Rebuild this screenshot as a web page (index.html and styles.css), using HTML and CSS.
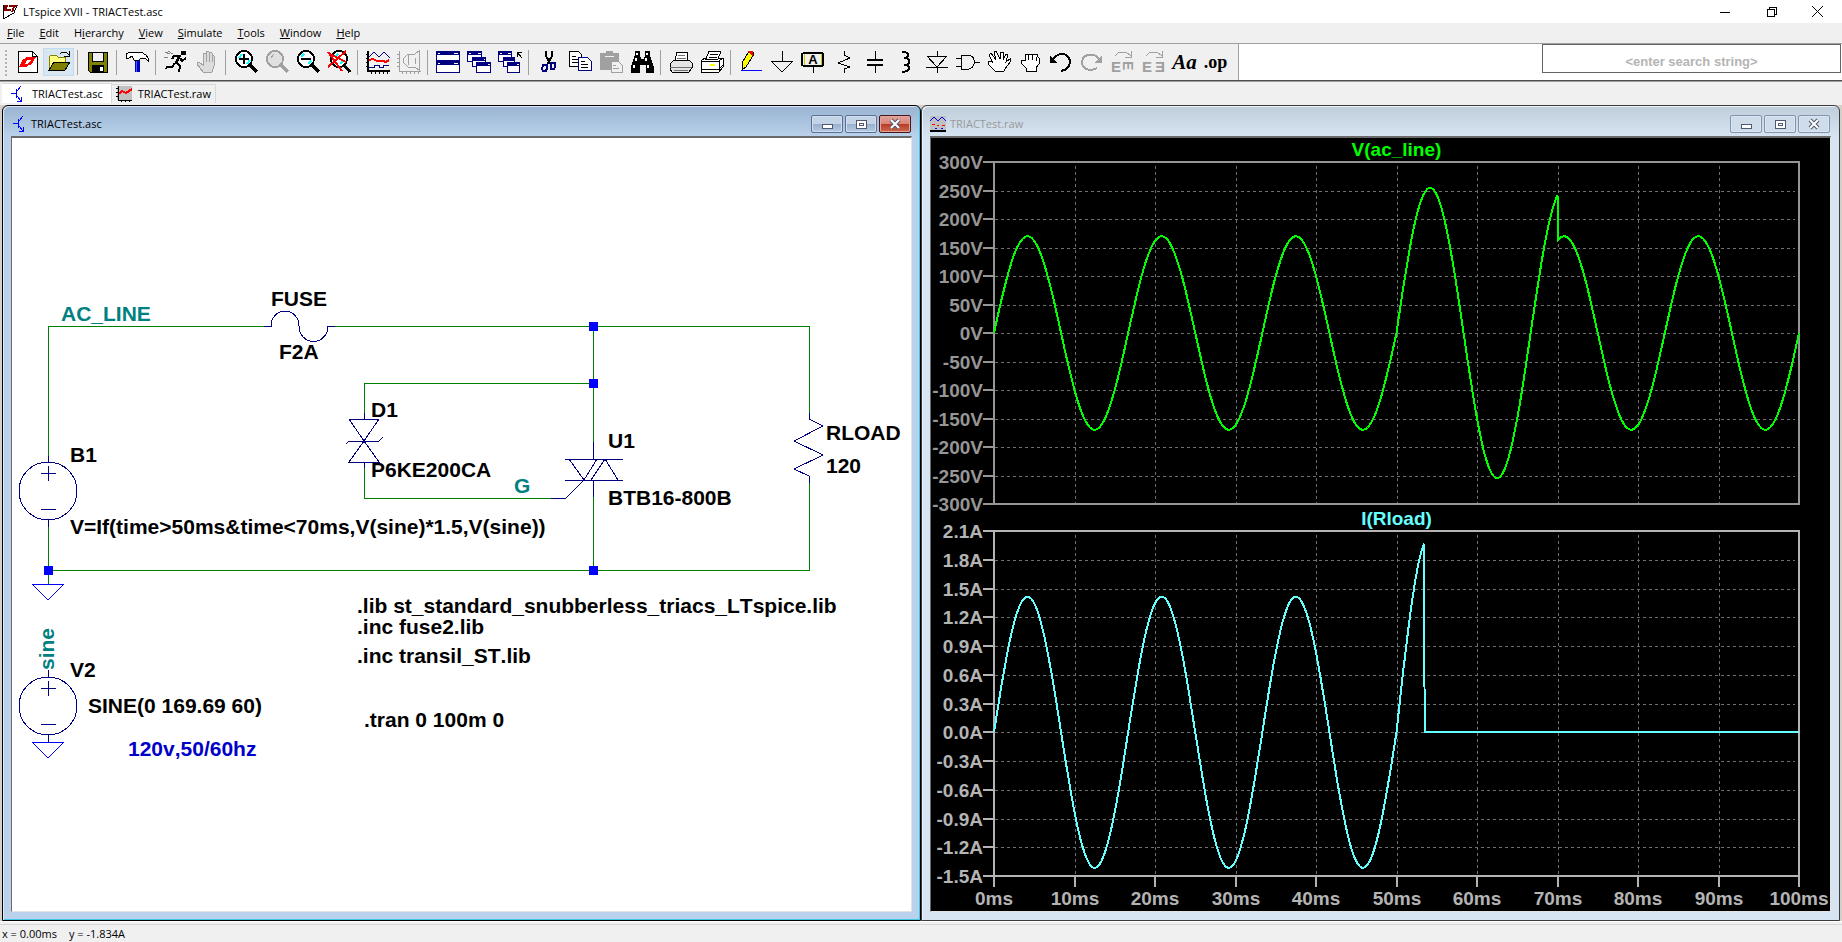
FILE: index.html
```html
<!DOCTYPE html>
<html lang="en">
<head>
    <meta charset="UTF-8">
    <meta name="viewport" content="width=device-width, initial-scale=1.0">
    <title>LTspice XVII - TRIACTest.asc</title>
    <link rel="stylesheet" href="styles.css">
</head>
<body>
    <header class="titlebar">
        <svg class="app-icon" width="16" height="16" viewBox="0 0 16 16">
            <path d="M1 1v14l11-6L15 1" fill="none" stroke="#000"/>
            <path d="M2 1h4L5 5h4v2H2zM7 1h9l-1 2h-2l-2 5H9l2-5H7z" fill="#800000"/>
        </svg>
        <span class="app-title">LTspice XVII - TRIACTest.asc</span>
        <div class="app-controls">
            <button aria-label="Minimize"><svg width="10" height="10"><path d="M0 5h10" stroke="#000"/></svg></button>
            <button aria-label="Restore"><svg width="11" height="11"><path d="M1 3h7v7H1zM3 3V1h7v7H8" fill="none" stroke="#000"/></svg></button>
            <button aria-label="Close"><svg class="smooth" width="11" height="11"><path d="M0 0l11 11M11 0L0 11" stroke="#000"/></svg></button>
        </div>
    </header>

    <nav class="menubar">
        <button><u>F</u>ile</button>
        <button><u>E</u>dit</button>
        <button>H<u>i</u>erarchy</button>
        <button><u>V</u>iew</button>
        <button><u>S</u>imulate</button>
        <button><u>T</u>ools</button>
        <button><u>W</u>indow</button>
        <button><u>H</u>elp</button>
    </nav>

    <div class="toolbar-row">
        <div class="toolbar">
            <button aria-label="New schematic"><svg viewBox="0 0 24 24"><path d="M2 1h14l5 5v16H2z" fill="#fff" stroke="#000"/><path d="M16 1v5h5" stroke="#000"/><path d="M3 17l4-8h5l-3 5h4l-2 3zM10 7h10l-5 8h-4l4-5h-6z" fill="#f00"/></svg></button>
            <button class="hot" aria-label="Open"><svg viewBox="0 0 24 24"><path d="M2 18V7l2-2h5l2 2h7v5" fill="#ffff80" stroke="#808000"/><path d="M2 20l5-8h16l-5 8z" fill="#808000" stroke="#000"/><path d="M13 4l2-2h4l3 3M22 1v5h-5" stroke="#000"/></svg></button>
            <span class="sep"></span>
            <button aria-label="Save"><svg viewBox="0 0 24 24"><path d="M2 2h19v20H4l-2-2z" fill="#808000" stroke="#000"/><path d="M6 2h11v9H6z" fill="#f0f0f0" stroke="#000"/><path d="M6 15h12v7H6z" fill="#000"/><path d="M14 17h3v4h-3z" fill="#fff"/></svg></button>
            <span class="sep"></span>
            <button aria-label="Control panel"><svg viewBox="0 0 24 24"><path d="M10 9h5v13h-5z" fill="#0000c0"/><path d="M11 9v13" stroke="#4060ff"/><path d="M1 4l4-2h11l5 3 2 3v3l-3-3h-4l-2 2H9L7 6 4 8H1z" fill="#fff" stroke="#000"/></svg></button>
            <span class="sep"></span>
            <button aria-label="Run"><svg viewBox="0 0 24 24"><path d="M17 1h5v4h-5z" fill="#000"/><path d="M16 5l-4 8" stroke="#000" stroke-width="3"/><path d="M16 6h-6l-2 3M16 8l2 3 4-3M12 12l4 4-1 6M11 13l-3 4H3l-1 2" stroke="#000" stroke-width="2"/><path d="M1 2l5 2M4 1l5 3M0 7l4 1" stroke="#808080"/></svg></button>
            <button aria-label="Halt"><svg viewBox="0 0 24 24"><path d="M8 22l-6-8v-2h2l4 3V4l1-1 2 1v8V2l1-1 2 1v10V3l2-1 1 1v9V6l1-1 1 1v10l-2 6z" fill="#dcdcdc" stroke="#a0a0a0"/></svg></button>
            <span class="sep"></span>
            <button aria-label="Zoom in"><svg viewBox="0 0 24 24"><circle cx="10" cy="9" r="8" fill="#fff" stroke="#000" stroke-width="2"/><path d="M5 8l3-4M13 14l3-4" stroke="#0ff" stroke-width="2"/><path d="M5 9h10M10 4v10" stroke="#000" stroke-width="2"/><path d="M16 15l7 7" stroke="#000" stroke-width="3"/></svg></button>
            <button aria-label="Pan"><svg viewBox="0 0 24 24"><circle cx="10" cy="9" r="8" fill="#e0e0e0" stroke="#a0a0a0" stroke-width="2"/><path d="M16 15l7 7" stroke="#a0a0a0" stroke-width="3"/><path d="M6 8l3-4" stroke="#a0a0a0"/></svg></button>
            <button aria-label="Zoom out"><svg viewBox="0 0 24 24"><circle cx="10" cy="9" r="8" fill="#fff" stroke="#000" stroke-width="2"/><path d="M5 7l3-3M12 14l3-3" stroke="#0ff" stroke-width="2"/><path d="M5 9h10" stroke="#000" stroke-width="2"/><path d="M16 15l7 7" stroke="#000" stroke-width="3"/></svg></button>
            <button aria-label="Zoom to fit"><svg viewBox="0 0 24 24"><circle cx="12" cy="9" r="8" fill="#fff" stroke="#000" stroke-width="2"/><path d="M8 7l3-3M13 14l3-3" stroke="#0ff" stroke-width="2"/><path d="M17 15l6 7" stroke="#000" stroke-width="3"/><path d="M1 2l14 19M19 1L1 17M1 3l18 9" stroke="#f00" stroke-width="2"/></svg></button>
            <span class="sep"></span>
            <button aria-label="Autorange"><svg viewBox="0 0 24 24"><path d="M2 1v20h22" stroke="#000" stroke-width="2"/><path d="M0 4h2M0 8h2M0 12h2M0 16h2M5 21v3M9 21v3M13 21v3M17 21v3M21 21v3" stroke="#000"/><path d="M3 7l5-5 5 5 5-5 6 6M3 17h5v-2h5v2h4v-2h6" stroke="#000080"/><path d="M3 10l4-1 4 2h6l3 1 3-2" stroke="#f00" stroke-width="2"/></svg></button>
            <button aria-label="Pick traces"><svg viewBox="0 0 24 24"><path d="M2 1v20h22M0 4h2M0 8h2M0 12h2M0 16h2M5 21v3M9 21v3M13 21v3M17 21v3M21 21v3M6 9l5-5h7l4-3v19l-4-3h-7l-5-5zM11 5v10M18 8v6" stroke="#a0a0a0"/></svg></button>
            <span class="sep"></span>
            <button aria-label="Tile windows"><svg viewBox="0 0 24 24"><path d="M0 1h24v22H0z" fill="#000080"/><path d="M1 5h22v5H1zM1 15h22v7H1z" fill="#fff"/><path d="M2 3h2M18 3h4M2 13h2M18 13h4" stroke="#fff"/></svg></button>
            <button aria-label="Cascade windows"><svg viewBox="0 0 24 24"><path d="M0 1h15v11H0zM5 7h14v10H5zM9 12h15v11H9z" fill="#000080"/><path d="M1 5h13v2H1zM1 7h4v4H1zM6 11h12v1H6zM6 12h3v4H6zM10 16h13v6H10z" fill="#fff"/><path d="M2 3h2M11 3h3M17 9h1M21 14h2" stroke="#fff"/></svg></button>
            <button aria-label="Close all windows"><svg viewBox="0 0 24 24"><path d="M0 1h14v11H0zM5 7h12v10H5zM9 12h13v11H9z" fill="#000080"/><path d="M1 5h12v2H1zM1 7h4v4H1zM6 11h10v1H6zM6 12h3v4H6zM10 16h11v6H10z" fill="#fff"/><path d="M2 3h2M10 3h3M19 14h2" stroke="#fff"/><path d="M24 8l-5-6M19 7V2h5" stroke="#000"/></svg></button>
            <span class="sep"></span>
            <button aria-label="Cut"><svg viewBox="0 0 24 24"><path d="M9 1v5l5 9M15 1v5l-5 9" stroke="#000" stroke-width="2"/><path d="M6 15h4v3l-1 3H6l-1-2zM14 13h4v4l-1 2h-3z" stroke="#000080" stroke-width="2"/></svg></button>
            <button aria-label="Copy"><svg viewBox="0 0 24 24"><path d="M1 1h9l3 3v12H1z" fill="#fff" stroke="#000"/><path d="M4 6h4M4 9h6M4 12h6" stroke="#000"/><path d="M10 7h9l4 4v9H10z" fill="#fff" stroke="#000080"/><path d="M13 11h4M13 14h7M13 17h7" stroke="#000"/></svg></button>
            <button aria-label="Paste"><svg viewBox="0 0 24 24"><path d="M1 3h6V1h7v2h6v17H1z" fill="#a0a0a0"/><path d="M6 6h9" stroke="#f0f0f0"/><path d="M12 11h7l4 4v7H12z" fill="#f0f0f0" stroke="#a0a0a0"/><path d="M14 15h3M14 18h6" stroke="#a0a0a0"/></svg></button>
            <button aria-label="Find"><svg viewBox="0 0 24 24"><path d="M5 1h5v4l1 4h3l1-4V1h5v4l4 12v6h-8v-8h-6v8H1v-6L5 5z" fill="#000"/><path d="M7 3v2M17 3v2M6 8v3M16 8v3M4 15v3M18 15v3" stroke="#fff" stroke-width="2"/></svg></button>
            <span class="sep"></span>
            <button aria-label="Print"><svg viewBox="0 0 24 24"><path d="M6 10l2-8h10l1 8" fill="#fff" stroke="#000"/><path d="M1 14l4-4h15l3 3v5l-3 4H3l-2-3z" fill="#e4e4e4" stroke="#000"/><path d="M1 17h22M5 20h14M9 5h7M8 8h9" stroke="#707070"/></svg></button>
            <button aria-label="Print setup"><svg viewBox="0 0 24 24"><path d="M1 11l4-3h18v9l-4 5H1z" fill="#fff" stroke="#000"/><path d="M6 9l3-8h12l-3 8z" fill="#fff" stroke="#000"/><path d="M10 4h8M9 7h8M1 11h18l4-3M19 11v11M1 19h18l4-4" stroke="#000"/><path d="M10 15h5" stroke="#ff0" stroke-width="2"/></svg></button>
            <span class="sep"></span>
            <button aria-label="Draw wire"><svg viewBox="0 0 24 24"><path d="M3 13L10 1h3l2 3-8 13-4 3z" fill="#ff0" stroke="#000"/><path d="M9 1h5v5l-4-3z" fill="#f00"/><path d="M2 20h21" stroke="#00f"/></svg></button>
            <button aria-label="Ground"><svg viewBox="0 0 24 24"><path d="M12 1v10M1 11h22L12 22z" stroke="#000"/></svg></button>
            <button aria-label="Label net"><svg viewBox="0 0 24 24"><path d="M1 4l2-1h18l1 1v11l-1 1H3l-2-1z" fill="#f0f0f0" stroke="#000" stroke-width="2"/><path d="M3 4v11M20 4v11" stroke="#c8c800"/><path d="M12 16v7" stroke="#000"/><text x="12" y="14" text-anchor="middle" font-size="13" font-weight="bold">A</text></svg></button>
            <button aria-label="Resistor"><svg viewBox="0 0 24 24"><path d="M12 1v4l6 3-12 5 12 4-6 2v4" stroke="#000"/></svg></button>
            <button aria-label="Capacitor"><svg viewBox="0 0 24 24"><path d="M12 1v8M12 15v8" stroke="#000"/><path d="M4 10h16M4 15h16" stroke="#000" stroke-width="2"/></svg></button>
            <button aria-label="Inductor"><svg viewBox="0 0 24 24"><path d="M9 1v1c7 0 7 6 1 6 7 0 7 7 0 7 7 0 7 6-1 7v1" stroke="#000" stroke-width="2"/></svg></button>
            <button aria-label="Diode"><svg viewBox="0 0 24 24"><path d="M12 1v5M2 6h20L12 17zM1 17h22M12 17v6" stroke="#000"/></svg></button>
            <button aria-label="Component"><svg viewBox="0 0 24 24"><path d="M5 5h8c7 2 7 12 0 14H5zM0 8h5M0 16h5M18 12h6" fill="#f0f0f0" stroke="#000"/></svg></button>
            <button aria-label="Move"><svg viewBox="0 0 24 24"><path d="M8 21L1 14v-3h3l2 2-4-8 2-2 5 7L7 2l2-1 4 8V2h3v8l3-6 2 1-2 7 4-3v3l-5 7-1 2z" fill="#fff" stroke="#000"/></svg></button>
            <button aria-label="Drag"><svg viewBox="0 0 24 24"><path d="M8 21v-3l-5-5v-3h4V5l2-1 2 1 1-1h3l1 1 3-1 1 3 1 1v6l-3 4v3z" fill="#fff" stroke="#000"/><path d="M10 5v5M14 5v5M18 7v4" stroke="#000"/></svg></button>
            <button aria-label="Undo"><svg viewBox="0 0 24 24"><path d="M4 10c2-7 15-9 17 1 0 6-4 9-9 10" stroke="#000" stroke-width="2"/><path d="M1 6v7h8z" fill="#000"/></svg></button>
            <button aria-label="Redo"><svg viewBox="0 0 24 24"><path d="M19 10C17 3 3 2 2 12c0 7 8 10 15 6" stroke="#a0a0a0" stroke-width="2"/><path d="M22 5v8h-8z" fill="#a0a0a0"/></svg></button>
            <button aria-label="Rotate"><svg viewBox="0 0 24 24"><path d="M4 6l4-4h7l5 4M20 1v6h-6" stroke="#a0a0a0"/><text class="dim" x="0" y="22" font-size="15">E</text><text class="dim" font-size="14" transform="translate(12 11) rotate(90)">E</text></svg></button>
            <button aria-label="Mirror"><svg viewBox="0 0 24 24"><path d="M4 6l4-4h7l5 4M20 1v6h-6" stroke="#a0a0a0"/><text class="dim" x="0" y="22" font-size="15">E</text><text class="dim" x="13" y="22" font-size="15">&#398;</text></svg></button>
            <button class="glyph italic" aria-label="Text">Aa</button>
            <button class="glyph" aria-label="SPICE directive">.op</button>
        </div>
        <div class="search">
            <input type="text" aria-label="Search" placeholder="&lt;enter search string&gt;">
        </div>
    </div>

    <div class="tabs">
        <button class="tab active">
            <svg width="16" height="16"><path d="M1 7h5M6 3v9M7 5l4-5M7 10l4 5M11 11v4H7" fill="none" stroke="#00f"/></svg>
            TRIACTest.asc
        </button>
        <button class="tab">
            <svg width="16" height="16"><path d="M1 0h15v14H1z" fill="#c0c0c0"/><path d="M2 0v14h14M0 2h2M0 6h2M0 10h2M5 14v2M9 14v2M13 14v2" fill="none" stroke="#000"/><path d="M3 8l3-3 4 2 6-4" fill="none" stroke="#f00" stroke-width="2"/></svg>
            TRIACTest.raw
        </button>
    </div>

    <main class="mdi">
        <section class="window active">
            <div class="window-title">
                <svg width="16" height="16"><path d="M2 7h5M7 3v9M8 5l4-5M8 10l4 5M12 11v4H8" fill="none" stroke="#00f"/></svg>
                <span>TRIACTest.asc</span>
                <div class="window-controls">
                    <button aria-label="Minimize"><svg width="12" height="12"><path d="M1 6h10v4H1z" fill="#fff" stroke="#505870"/></svg></button>
                    <button aria-label="Restore"><svg width="12" height="12"><path d="M1 2h10v8H1z" fill="#fff" stroke="#505870"/><path d="M4 5h4v2H4z" fill="none" stroke="#505870"/></svg></button>
                    <button class="close" aria-label="Close"><svg class="smooth" width="12" height="12"><path d="M2 2l8 8M10 2l-8 8" stroke="#505870" stroke-width="4"/><path d="M2 2l8 8M10 2l-8 8" stroke="#fff" stroke-width="2"/></svg></button>
                </div>
            </div>
            <div class="client">
                <svg class="schematic">
                    <g class="wire" transform="translate(-12 -138)">
                        <path d="M48 456V326H264M335 326H809V413M809 483V570H48V527M48 570V584"/>
                        <path d="M593 326V442M593 497V570M593 383H364V413M364 468V498H551"/>
                    </g>
                    <g class="symbol" transform="translate(-12 -138)">
                        <!-- fuse -->
                        <path d="M264 326H271A14 15 0 0 1 299 326A14 15 0 0 0 328 326H335"/>
                        <!-- B1 and V2 sources -->
                        <circle cx="48" cy="491" r="29"/>
                        <path d="M48 456V462M48 520V527M41 473H56M48 466V481M41 509H56"/>
                        <circle cx="48" cy="706" r="29"/>
                        <path d="M48 670V677M48 735V742M41 688H56M48 681V696M41 724H56"/>
                        <!-- D1 bidirectional TVS -->
                        <path d="M364 413V419M349 419H379L364 441ZM349 462H379L364 441ZM364 462V468M346 444L349 441H379L383 437"/>
                        <!-- U1 triac -->
                        <path d="M593 442V459M565 459H623M565 480H623M593 480V497M569 459L584 480L597 459M591 480L605 459L618 480M584 480L566 498H551"/>
                        <!-- load resistor -->
                        <path d="M809 413V419L823 426L794 441L823 455L794 469L809 476V483"/>
                    </g>
                    <g class="ground" transform="translate(-12 -138)">
                        <path d="M32 584H64L48 600ZM32 742H64L48 758Z"/>
                    </g>
                    <g class="node" transform="translate(-12 -138)">
                        <rect x="589" y="322" width="9" height="9"/>
                        <rect x="589" y="379" width="9" height="9"/>
                        <rect x="589" y="566" width="9" height="9"/>
                        <rect x="44" y="566" width="9" height="9"/>
                    </g>
                    <g transform="translate(-12 -138)">
                        <text class="net" x="61" y="321">AC_LINE</text>
                        <text class="net" x="514" y="493">G</text>
                        <text class="net" transform="translate(54 670) rotate(-90)">sine</text>
                        <text x="271" y="306">FUSE</text>
                        <text x="279" y="359">F2A</text>
                        <text x="70" y="462">B1</text>
                        <text x="70" y="534">V=If(time&gt;50ms&amp;time&lt;70ms,V(sine)*1.5,V(sine))</text>
                        <text x="371" y="417">D1</text>
                        <text x="371" y="477">P6KE200CA</text>
                        <text x="608" y="448">U1</text>
                        <text x="608" y="505">BTB16-800B</text>
                        <text x="826" y="440">RLOAD</text>
                        <text x="826" y="473">120</text>
                        <text x="357" y="613">.lib st_standard_snubberless_triacs_LTspice.lib</text>
                        <text x="357" y="634">.inc fuse2.lib</text>
                        <text x="357" y="663">.inc transil_ST.lib</text>
                        <text x="364" y="727">.tran 0 100m 0</text>
                        <text x="70" y="677">V2</text>
                        <text x="88" y="713">SINE(0 169.69 60)</text>
                        <text class="note" x="128" y="756">120v,50/60hz</text>
                    </g>
                </svg>
            </div>
        </section>

        <section class="window">
            <div class="window-title">
                <svg width="16" height="16"><path d="M0 0h16v14H0z" fill="#c0c0c0"/><path d="M0 5l4-4 4 4 4-4 4 4" fill="none" stroke="#00f"/><path d="M2 8h3M7 9h2M12 9h3" stroke="#f00"/><path d="M5 12h2M11 12h2" stroke="#00f"/><path d="M0 15h16" stroke="#000" stroke-width="2"/></svg>
                <span>TRIACTest.raw</span>
                <div class="window-controls">
                    <button aria-label="Minimize"><svg width="12" height="12"><path d="M1 6h10v4H1z" fill="#fff" stroke="#505870"/></svg></button>
                    <button aria-label="Restore"><svg width="12" height="12"><path d="M1 2h10v8H1z" fill="#fff" stroke="#505870"/><path d="M4 5h4v2H4z" fill="none" stroke="#505870"/></svg></button>
                    <button aria-label="Close"><svg class="smooth" width="12" height="12"><path d="M2 2l8 8M10 2l-8 8" stroke="#505870" stroke-width="4"/><path d="M2 2l8 8M10 2l-8 8" stroke="#fff" stroke-width="2"/></svg></button>
                </div>
            </div>
            <div class="client">
                <svg class="waveform" id="waveform"></svg>
            </div>
        </section>
    </main>

    <footer class="statusbar">
        <span>x = 0.00ms</span>
        <span>y = -1.834A</span>
    </footer>

    <script src="plot.js"></script>
</body>
</html>
```
FILE: styles.css
```css
* {
    box-sizing: border-box;
}

body {
    margin: 0;
    height: 100vh;
    display: flex;
    flex-direction: column;
    font-family: "Open Sans", "Noto Sans", sans-serif;
    font-size: 11px;
    line-height: 16px;
    color: #000;
    background-color: #f0f0f0;
    overflow: hidden;
}

button {
    font: inherit;
    color: inherit;
    background: none;
    border: none;
    padding: 0;
}

svg {
    display: block;
    flex: none;
    shape-rendering: crispEdges;
}

svg.smooth {
    shape-rendering: auto;
}

.titlebar {
    display: flex;
    align-items: center;
    height: 23px;
    padding-left: 2px;
    background-color: #fff;
}

.app-title {
    margin-left: 5px;
}

.app-controls {
    display: flex;
    margin-left: auto;
    padding-right: 2px;
}

.app-controls button {
    display: flex;
    align-items: center;
    justify-content: center;
    width: 46px;
    height: 20px;
}

.menubar {
    display: flex;
    gap: 1px;
    height: 21px;
    border-bottom: 1px solid #a0a0a0;
}

.menubar button {
    padding: 0 7px;
}

.toolbar-row {
    display: flex;
    height: 38px;
    background-color: #fff;
    border-bottom: 2px groove #a0a0a0;
}

.toolbar {
    display: flex;
    align-items: center;
    width: 1239px;
    flex: none;
    padding-left: 12px;
    background-color: #f0f0f0;
    background-image: repeating-linear-gradient(#b4b4b4 0 2px, #f0f0f0 2px 4px);
    background-size: 2px 26px;
    background-position: 5px 6px;
    background-repeat: no-repeat;
    border-right: 1px solid #a0a0a0;
}

.toolbar button {
    display: flex;
    align-items: center;
    justify-content: center;
    width: 31px;
    height: 28px;
    flex: none;
}

.toolbar button svg {
    width: 24px;
    height: 24px;
    fill: none;
    overflow: visible;
}

.toolbar button.hot {
    background-color: #d8e6f2;
    border: 1px solid #c0dcf3;
}

.toolbar svg text {
    font-family: "Liberation Sans", sans-serif;
    fill: #000;
}

.toolbar svg .dim {
    font-weight: bold;
    fill: #a0a0a0;
}

.toolbar .glyph {
    font-family: "Liberation Serif", serif;
    font-size: 18px;
    font-weight: bold;
}

.toolbar .italic {
    font-size: 21px;
    font-style: italic;
}

.sep {
    width: 8px;
    height: 25px;
    flex: none;
    background: linear-gradient(#a0a0a0, #a0a0a0) 3px 0 / 1px 100% no-repeat;
}

.search {
    flex: 1;
    display: flex;
    justify-content: flex-end;
    align-items: flex-start;
    padding-right: 1px;
}

.search input {
    width: 299px;
    height: 29px;
    padding: 5px 4px 0;
    border: 1px solid #646464;
    font-family: "Liberation Sans", sans-serif;
    font-size: 13px;
    font-weight: bold;
    text-align: center;
}

.search input::placeholder {
    color: #b4b4b4;
}

.tabs {
    display: flex;
    align-items: flex-start;
    height: 23px;
    padding-left: 2px;
}

.tab {
    display: flex;
    align-items: center;
    gap: 6px;
    height: 19px;
    margin-top: 2px;
    padding: 0 4px;
    border: 1px solid #d9d9d9;
    border-left: none;
    border-bottom: none;
}

.tab.active {
    height: 20px;
    margin-top: 1px;
    padding: 0 8px;
    background-color: #fff;
}

.mdi {
    flex: 1;
    display: grid;
    grid-template-columns: 1fr 1fr;
    min-height: 0;
    padding: 0 2px;
    margin-bottom: 2px;
    background-color: #d4d0c8;
    border-bottom: 1px solid #fff;
}

.window {
    display: flex;
    flex-direction: column;
    min-width: 0;
    padding: 0 8px 8px;
    border: 1px solid #3c3c3c;
    border-radius: 6px 6px 0 0;
    background: linear-gradient(#bfcddb, #d7e4f2 30px);
    box-shadow: inset 1px 1px 0 #f0f4fa;
}

.window.active {
    border-color: #000;
    background: linear-gradient(#99b4d1, #b9d1ea 30px);
    box-shadow: inset 1px 1px 0 #dce8f5, inset -1px -1px 0 #3fc8e8;
}

.window-title {
    display: flex;
    align-items: center;
    gap: 4px;
    height: 30px;
    padding: 6px 1px 0 0;
    color: #999;
}

.window.active .window-title {
    color: #000;
}

.window-controls {
    display: flex;
    gap: 2px;
    margin-left: auto;
}

.window-controls button {
    display: flex;
    align-items: center;
    justify-content: center;
    width: 32px;
    height: 18px;
    border: 1px solid #8493ae;
    border-radius: 2px;
    background-color: #cfdcea;
    box-shadow: inset 0 0 0 1px #dce6f0;
}

.window.active .window-controls button {
    border-color: #5a6f91;
    background: linear-gradient(#c3d4e7 50%, #98b0cd 50%, #b4cbe4);
    box-shadow: inset 0 0 0 1px #d0deee;
}

.window.active .window-controls .close {
    border-color: #43141b;
    background: linear-gradient(#e2a29a 0, #d98378 50%, #b83a24 50%, #cf6a50);
    box-shadow: inset 0 0 0 1px #e0a89c;
}

.client {
    flex: 1;
    min-height: 0;
    border: 1px solid #e3e3e3;
    border-top: 2px solid #696969;
    border-left-color: #696969;
    background-color: #fff;
}

.schematic,
.waveform {
    width: 100%;
    height: 100%;
    font-kerning: none;
}

.schematic path,
.schematic circle {
    fill: none;
}

.wire {
    stroke: #008000;
}

.symbol {
    stroke: #000080;
}

.ground {
    stroke: #0000ff;
}

.node {
    fill: #0000ff;
}

.schematic text {
    font-family: "Liberation Sans", sans-serif;
    font-size: 21px;
    font-weight: bold;
}

.schematic .net {
    fill: #008080;
}

.schematic .note {
    fill: #0000c8;
}

.waveform {
    background-color: #000;
}

.waveform text {
    font-family: "Liberation Sans", sans-serif;
    font-size: 19px;
    font-weight: bold;
}

.grid {
    stroke: #6e6e6e;
    stroke-dasharray: 3 3;
}

.axis,
.trace {
    fill: none;
    stroke-width: 2;
}

.statusbar {
    display: flex;
    gap: 12px;
    height: 18px;
    padding: 1px 2px 0;
    border-top: 1px solid #d7d7d7;
}
```
FILE: plot.js
```js
const svg = document.getElementById("waveform");

const panes = [
    {
        title: "V(ac_line)", color: "#00ff00", axis: "#969696",
        min: -300, max: 300, step: 50, digits: 0, unit: "V",
        value: acLine
    },
    {
        title: "I(Rload)", color: "#66ffff", axis: "#b4b4b4",
        min: -1.5, max: 2.1, step: 0.3, digits: 1, unit: "A",
        value: loadCurrent
    }
];

// time is in ms
function sine(t) {
    return 169.69 * Math.sin(2 * Math.PI * 60 * t / 1000);
}

function acLine(t) {
    return t > 50 && t <= 70 ? sine(t) * 1.5 : sine(t);
}

function loadCurrent(t) {
    if (t > 53.4) return 0; // fuse is open
    return acLine(t) / (t > 50 ? 124 : 120);
}

function add(name, attrs, text) {
    const el = document.createElementNS("http://www.w3.org/2000/svg", name);
    for (const key in attrs) el.setAttribute(key, attrs[key]);
    if (text) el.textContent = text;
    svg.appendChild(el);
}

function drawPane(pane, left, right, top, bottom) {
    const rows = Math.round((pane.max - pane.min) / pane.step);
    const xAt = t => left + (right - left) * t / 100;
    const yAt = v => bottom - (bottom - top) * (v - pane.min) / (pane.max - pane.min);

    let grid = "";
    for (let i = 1; i < 10; i++) {
        const x = Math.round(xAt(i * 10));
        grid += `M${x} ${top + 4}V${bottom}`;
    }
    for (let i = 1; i < rows; i++) {
        const y = Math.round(yAt(pane.max - i * pane.step));
        grid += `M${left + 1} ${y}H${right - 4}`;
    }
    add("path", { class: "grid", d: grid });

    let axis = `M${left} ${top}H${right}V${bottom}H${left}Z`;
    for (let i = 0; i <= rows; i++) {
        const value = pane.max - i * pane.step;
        const y = Math.round(yAt(value));
        axis += `M${left - 11} ${y}H${left}`;
        const label = (Math.abs(value) < 0.01 ? 0 : value).toFixed(pane.digits) + pane.unit;
        add("text", { x: left - 11, y: y + 7, "text-anchor": "end", fill: pane.axis }, label);
    }
    if (pane === panes[panes.length - 1]) {
        for (let i = 0; i <= 10; i++) {
            const x = Math.round(xAt(i * 10));
            axis += `M${x} ${bottom}V${bottom + 11}`;
            add("text", { x: x, y: bottom + 29, "text-anchor": "middle", fill: pane.axis }, i * 10 + "ms");
        }
    }
    add("path", { class: "axis", stroke: pane.axis, d: axis });

    let trace = "";
    for (let i = 0; i <= 1000; i++) {
        const t = i / 10;
        trace += (i ? "L" : "M") + xAt(t).toFixed(1) + " " + yAt(pane.value(t)).toFixed(1);
    }
    add("path", { class: "trace", stroke: pane.color, d: trace });
    add("text", { x: (left + right) / 2, y: top - 6, "text-anchor": "middle", fill: pane.color }, pane.title);
}

function draw() {
    svg.innerHTML = "";
    const width = svg.clientWidth;
    const height = svg.clientHeight;
    const left = 63;
    const right = width - 31;
    const middle = 24 + Math.floor((height - 89) / 2);
    drawPane(panes[0], left, right, 24, middle);
    drawPane(panes[1], left, right, middle + 27, height - 35);
}

window.addEventListener("resize", draw);
draw();
```
